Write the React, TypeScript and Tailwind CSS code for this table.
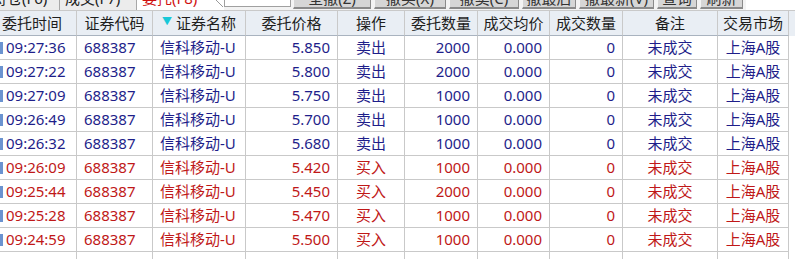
import React from "react";

type Row = { t: string; p: string; op: string; q: string; buy: boolean };

const rows: Row[] = [
  { t: "09:27:36", p: "5.850", op: "卖出", q: "2000", buy: false },
  { t: "09:27:22", p: "5.800", op: "卖出", q: "2000", buy: false },
  { t: "09:27:09", p: "5.750", op: "卖出", q: "1000", buy: false },
  { t: "09:26:49", p: "5.700", op: "卖出", q: "1000", buy: false },
  { t: "09:26:32", p: "5.680", op: "卖出", q: "1000", buy: false },
  { t: "09:26:09", p: "5.420", op: "买入", q: "1000", buy: true },
  { t: "09:25:44", p: "5.450", op: "买入", q: "2000", buy: true },
  { t: "09:25:28", p: "5.470", op: "买入", q: "1000", buy: true },
  { t: "09:24:59", p: "5.500", op: "买入", q: "1000", buy: true },
];

const grid =
  "grid grid-cols-[77px_76px_93px_92px_67px_73px_72px_73px_95px_71px]";

const cell = "border-r border-b border-[#c9c9c9] flex items-center whitespace-nowrap overflow-hidden";

function Btn({ w, label }: { w: string; label: string }) {
  return (
    <div
      className={`${w} h-[9px] shrink-0 overflow-hidden bg-[#d6d6d6] border-b-2 border-r border-l border-[#8a8a8a] border-l-[#f4f4f4] flex justify-center mr-[3px]`}
    >
      <span className="-mt-[11px] leading-[18px] text-[15px] text-[#333]">{label}</span>
    </div>
  );
}

export default function App() {
  const headers = [
    "委托时间",
    "证券代码",
    "证券名称",
    "委托价格",
    "操作",
    "委托数量",
    "成交均价",
    "成交数量",
    "备注",
    "交易市场",
  ];
  return (
    <div
      className="w-[795px] h-[259px] overflow-hidden bg-white text-[15px]"
      style={{ fontFamily: '"Noto Sans", "Noto Sans CJK SC", sans-serif' }}
    >
      {/* top tab strip (cut off) */}
      <div className="h-[10px] flex items-start overflow-hidden bg-[#f3f3f3]">
        <div className="w-[60px] h-[10px] shrink-0 overflow-hidden border-r border-[#a8a8a8] bg-[#ececec]">
          <div className="-mt-[11px] -ml-[8px] leading-[18px] text-[#222]">持仓(F6)</div>
        </div>
        <div className="w-[77px] h-[10px] shrink-0 overflow-hidden border-r border-[#a8a8a8] bg-[#ececec]">
          <div className="-mt-[11px] ml-[5px] leading-[18px] text-[#222]">成交(F7)</div>
        </div>
        <div className="relative w-[87px] h-[10px] shrink-0 overflow-hidden bg-white">
          <div className="-mt-[11px] ml-[5px] leading-[18px] text-[#d01010]">委托(F8)</div>
          <svg className="absolute right-0 top-0" width="10" height="10">
            <line x1="2" y1="0" x2="9" y2="7" stroke="#9a9a9a" strokeWidth="1" />
          </svg>
        </div>
        <div className="w-[67px] h-[7px] shrink-0 bg-white border-l border-b border-r border-[#a0a0a0]" />
        <div className="w-[2px] shrink-0" />
        <Btn w="w-[78px]" label="全撤(Z)" />
        <Btn w="w-[72px]" label="撤买(X)" />
        <Btn w="w-[70px]" label="撤卖(C)" />
        <Btn w="w-[54px]" label="撤最后" />
        <Btn w="w-[75px]" label="撤最新(V)" />
        <Btn w="w-[40px]" label="查询" />
        <Btn w="w-[43px]" label="刷新" />
        <div className="flex-1 h-[10px] bg-white" />
      </div>

      {/* header */}
      <div className={`${grid} h-[26px] bg-[#e9eef4] border-t border-[#c9c9c9]`}>
        {headers.map((h, i) => (
          <div
            key={h}
            className={`${cell} border-b-[#a9b3bf] text-[#1e1e1e] ${
              i === 0 ? "justify-start pl-[2px]" : "justify-center"
            }`}
          >
            {i === 2 && (
              <span className="text-[#18c8d8] text-[10px] mr-[4px] mt-[-3px]">▼</span>
            )}
            {h}
          </div>
        ))}
      </div>

      {/* rows */}
      {rows.map((r) => {
        const c = r.buy ? "text-[#c01818]" : "text-[#1e1e8a]";
        return (
          <div key={r.t} className={`${grid} h-[24px] ${c}`}>
            <div className={`${cell} relative pl-[6px]`}>
              <span className="absolute left-0 top-[6px] w-[3px] h-[12px] bg-[#6b93d0]" />
              {r.t}
            </div>
            <div className={`${cell} pl-[7px]`}>688387</div>
            <div className={`${cell} pl-[7px]`}>信科移动-U</div>
            <div className={`${cell} justify-end pr-[7px]`}>{r.p}</div>
            <div className={`${cell} justify-center`}>{r.op}</div>
            <div className={`${cell} justify-end pr-[7px]`}>{r.q}</div>
            <div className={`${cell} justify-end pr-[7px]`}>0.000</div>
            <div className={`${cell} justify-end pr-[7px]`}>0</div>
            <div className={`${cell} justify-center`}>未成交</div>
            <div className={`${cell} justify-center`}>上海A股</div>
          </div>
        );
      })}
      <div className={`${grid} h-[24px]`}>
        {headers.map((h) => (
          <div key={h} className={cell} />
        ))}
      </div>
    </div>
  );
}
